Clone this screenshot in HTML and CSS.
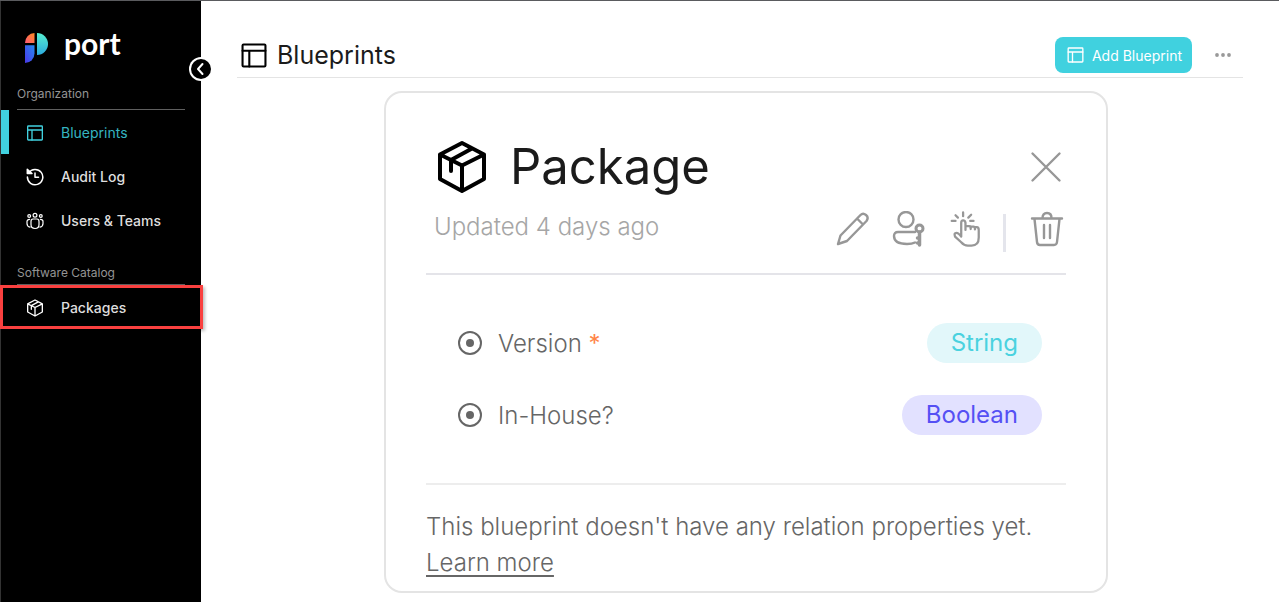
FILE: index.html
```html
<!DOCTYPE html>
<html lang="en">
<head>
<meta charset="utf-8">
<meta name="viewport" content="width=device-width, initial-scale=1">
<title>Blueprints</title>
<link rel="stylesheet" href="styles.css">
</head>
<body>
<svg class="defs" aria-hidden="true">
  <defs>
    <linearGradient id="orange" x1="1" y1="0" x2="0" y2="1"><stop offset="0" stop-color="#ff8a1f"/><stop offset="1" stop-color="#ff5a78"/></linearGradient>
    <linearGradient id="teal" x1="0" y1="0" x2="0" y2="1"><stop offset="0" stop-color="#56efd0"/><stop offset="1" stop-color="#2caade"/></linearGradient>
    <linearGradient id="blue" x1="1" y1="0" x2="0" y2="1"><stop offset="0" stop-color="#2689f0"/><stop offset="1" stop-color="#4a37e8"/></linearGradient>
    <symbol id="layout" viewBox="0 0 24 24">
      <rect x="1" y="1.500" width="22" height="21" rx="1"/><path d="M1 7.500h22M7.500 7.500v15"/>
    </symbol>
    <symbol id="box" viewBox="0 0 52 54">
      <path d="M26 3 48 14.500V39L26 51 4 39V14.500ZM4 14.500 26 25.500 48 14.500M26 25.500V51M36 8.500 15 20v11"/>
    </symbol>
  </defs>
</svg>
<div class="app">
  <aside class="sidebar">
    <a class="brand" href="#">
      <svg class="brand-mark" viewBox="0 0 23 30" aria-hidden="true">
        <path fill="url(#orange)" d="M0 10A10 10 0 0 1 9.500 0V10Z"/>
        <path fill="url(#blue)" d="M0 12.300H9.500V20.500A9.500 9.500 0 0 1 0 30Z"/>
        <path fill="url(#teal)" d="M12 0A11 11 0 0 1 12 22Z"/>
      </svg>
      <span>port</span>
    </a>
    <button class="collapse" aria-label="Collapse sidebar"><svg viewBox="0 0 20 20" aria-hidden="true"><path d="M11.500 5 7 10l4.500 5"/></svg></button>
    <nav>
      <h2 class="group">Organization</h2>
      <ul class="links">
        <li><a class="link active" href="#"><svg class="icon layout" aria-hidden="true"><use href="#layout"/></svg>Blueprints</a></li>
        <li><a class="link" href="#"><svg class="icon" viewBox="0 0 18 18" aria-hidden="true"><path d="M2.700 4.800A7.700 7.700 0 1 1 1.400 9"/><path d="M1.300 1.300v4.200H6Z" fill="#fff"/><path d="M9 5v4.300h3.500"/></svg>Audit Log</a></li>
        <li><a class="link" href="#"><svg class="icon team" viewBox="0 0 18 18" aria-hidden="true"><circle cx="9" cy="3.200" r="1.900"/><circle cx="3.200" cy="4" r="1.400"/><circle cx="14.800" cy="4" r="1.400"/><path d="M5 9.500Q5 7 7 7h4q2 0 2 2.500v3Q13 16.500 9 16.500T5 12.500ZM3.600 7.300Q1 7.300 1 9.500v2q0 3 3 3.600M14.400 7.300Q17 7.300 17 9.500v2q0 3-3 3.600"/></svg>Users &amp; Teams</a></li>
      </ul>
      <h2 class="group catalog">Software Catalog</h2>
      <ul class="links">
        <li class="marked"><a class="link" href="#"><svg class="icon box" aria-hidden="true"><use href="#box"/></svg>Packages</a></li>
      </ul>
    </nav>
  </aside>
  <main class="main">
    <header class="header">
      <svg class="title-icon" aria-hidden="true"><use href="#layout"/></svg>
      <h1>Blueprints</h1>
      <button class="add"><svg aria-hidden="true"><use href="#layout"/></svg>Add Blueprint</button>
      <button class="more" aria-label="More options"><svg viewBox="0 0 16 4" aria-hidden="true"><circle cx="2" cy="2" r="1.900"/><circle cx="8" cy="2" r="1.900"/><circle cx="14" cy="2" r="1.900"/></svg></button>
    </header>
    <div class="board">
      <article class="card">
        <div class="card-title">
          <svg class="card-icon" aria-hidden="true"><use href="#box"/></svg>
          <h2>Package</h2>
          <button class="tool" aria-label="Close"><svg class="close" viewBox="0 0 36 36" aria-hidden="true"><path d="m4.500 4.500 27 27m0-27-27 27"/></svg></button>
        </div>
        <div class="card-meta">
          <p>Updated 4 days ago</p>
          <div class="tools">
            <button class="tool" aria-label="Edit"><svg viewBox="0 0 36 36" aria-hidden="true"><path d="M3 33 5.500 24.500 25.500 4Q28 1.500 31 4t.5 6L12 30ZM22 7.500l6 6"/></svg></button>
            <button class="tool" aria-label="Permissions"><svg viewBox="0 0 36 36" aria-hidden="true"><circle cx="15" cy="8.500" r="7.500"/><path d="M24 21H7Q3 21 3 25q0 8 13 8 5 0 8-1.500"/><circle cx="28.500" cy="17.500" r="3.500" stroke-width="3"/><path d="M28.500 21v13M28.500 27h-2M28.500 32h-2" stroke-width="3.500"/></svg></button>
            <button class="tool" aria-label="Actions"><svg viewBox="-2 -1 36 38" aria-hidden="true"><path d="M2 9.500h4M6 3.500l2.500 2.500M14 .5v4M22.500 3l-3 3M21.500 9.500H25"/><path d="M12 25.500V11.500Q12 9 14 9t2.500 2.500V19v-4h4q1.500 0 1.500 3v-2.500h3q1.500 0 1.500 3V16h2q2 0 2 3v8Q30.500 35.500 23 35.500h-4q-4 0-7-3.500L5.500 26Q4 22 7 22q2 0 5 4Z"/></svg></button>
            <span class="divider"></span>
            <button class="tool" aria-label="Delete"><svg viewBox="0 0 36 36" aria-hidden="true"><path d="M3 7.500h30M13.500 7Q13.500 2 18 2t4.500 5M5.500 8 8 31q.3 3 3 3h14q2.700 0 3-3L30.500 8M15 14v13M21 14v13"/></svg></button>
          </div>
        </div>
        <ul class="props">
          <li><svg class="dot" viewBox="0 0 24 24" aria-hidden="true"><circle cx="12" cy="12" r="11"/><circle class="core" cx="12" cy="12" r="4"/></svg><span>Version <b>*</b></span><span class="tag string">String</span></li>
          <li><svg class="dot" viewBox="0 0 24 24" aria-hidden="true"><circle cx="12" cy="12" r="11"/><circle class="core" cx="12" cy="12" r="4"/></svg><span>In-House?</span><span class="tag boolean">Boolean</span></li>
        </ul>
        <p class="note">This blueprint doesn't have any relation properties yet. <a href="#">Learn more</a></p>
      </article>
    </div>
  </main>
</div>
</body>
</html>
```
FILE: styles.css
```css
* { box-sizing: border-box; }
body { margin: 0; background: #fff; color: #1b1b1b; font-family: Inter, "Liberation Sans", sans-serif; }
h1, h2, p, ul { margin: 0; padding: 0; font-weight: 400; }
ul { list-style: none; }
button { border: 0; padding: 0; background: none; font: inherit; cursor: pointer; }
svg { display: block; flex: none; fill: none; stroke: currentColor; stroke-linecap: round; stroke-linejoin: round; }
.defs { position: absolute; width: 0; height: 0; }

.app { display: flex; min-height: 100vh; border-top: 1px solid #5a5b5e; }

.sidebar { position: relative; flex: none; width: 201px; background: #000; color: #fff; border-left: 1px solid #333; }
.brand { display: flex; gap: 16px; padding: 24px 24px 0; height: 84px; color: #fff; text-decoration: none; font: 700 30px/36px Lato, sans-serif; }
.brand-mark { width: 23px; height: 30px; margin-top: 8px; stroke: none; }
.collapse { position: absolute; top: 58px; right: -10px; width: 20px; height: 20px; border-radius: 50%; background: #000; color: #fff; box-shadow: 0 0 0 2px #fff; }
.collapse svg { width: 20px; height: 20px; stroke-width: 2; }
.group { height: 25px; margin: 0 16px; border-bottom: 1px solid #5f5f5f; color: #949494; font-size: 12px; line-height: 18px; }
.catalog { height: 21px; margin-top: 22px; }
.link { display: flex; align-items: center; gap: 17px; height: 44px; padding: 1px 0 0 25px; color: #dedede; font-size: 14px; font-weight: 500; line-height: 20px; text-decoration: none; }
.link.active { border-left: 8px solid #41d1df; padding-left: 17px; color: #35b5c1; font-weight: 400; }
.icon { width: 18px; height: 18px; color: #fff; stroke-width: 1.500; }
.icon.team { stroke-width: 1.200; }
.icon.layout { width: 18px; height: 16px; color: #41d1df; stroke-width: 2; }
.icon.box { stroke-width: 4; }
.marked { position: relative; }
.marked::after { content: ""; position: absolute; inset: 0 -2px 0 -1px; border: 3px solid #f9403f; box-shadow: 2px 2px 3px rgba(0, 0, 0, .25); pointer-events: none; }

.main { flex: 1; min-width: 0; padding: 32px 36px 9px; }
.header { display: flex; align-items: center; height: 45px; padding: 0 12px 0 4px; border-bottom: 1px solid #e4e4e4; }
.title-icon { width: 26px; height: 25px; stroke-width: 2; color: #000; }
.header h1 { margin: 0 auto 0 10px; font-size: 25px; line-height: 32px; }
.add { display: flex; align-items: center; gap: 8px; height: 36px; padding: 0 10px 0 12px; border-radius: 8px; background: #40d1df; color: #fff; font-size: 14px; }
.add svg { width: 17px; height: 16px; stroke-width: 2; }
.more { margin-left: 23px; color: #999; }
.more svg { width: 16px; height: 4px; fill: currentColor; stroke: none; }

.board { padding: 13px 0 0 12px; }
.card { max-width: 724px; margin: 0 auto; padding: 42px 40px 10px; border: 2px solid #e4e4e4; border-radius: 18px; background: #fff; }
.card-title { display: flex; align-items: center; height: 64px; padding: 0 2px 0 10px; }
.card-icon { width: 52px; height: 54px; color: #000; stroke-width: 4; }
.card-title h2 { margin: 0 auto 0 22px; font-size: 49px; line-height: 60px; }
.tool { color: #979797; }
.tool svg { width: 36px; height: 36px; stroke-width: 2.400; }
.card-meta { display: flex; justify-content: space-between; height: 76px; padding: 0 1px 0 8px; border-bottom: 2px solid #e4e4e9; }
.card-meta p { padding-top: 12px; color: #a6a6a6; font-size: 24px; font-weight: 300; line-height: 32px; }
.tools { display: flex; align-items: center; gap: 20px; padding-bottom: 14px; }
.divider { width: 3px; height: 38px; margin: 8px 3px 0 0; background: #e4e5ec; }
.props { display: flex; flex-direction: column; gap: 32px; padding: 48px 24px; border-bottom: 2px solid #ededed; color: #666; font-size: 24px; font-weight: 300; }
.props li { display: flex; align-items: center; gap: 16px; padding-left: 8px; }
.dot { width: 24px; height: 24px; stroke-width: 2; }
.core { fill: currentColor; stroke: none; }
.props b { color: #ff8548; font-weight: 400; }
.tag { margin-left: auto; padding: 0 24px; border-radius: 20px; line-height: 40px; font-weight: 400; }
.string { background: #e2f7fa; color: #4ad2df; }
.boolean { background: #e2e1ff; color: #5550f4; }
.note { padding-top: 24px; color: #666; font-size: 24px; font-weight: 300; line-height: 36px; }
.note a { color: inherit; text-underline-offset: 4px; text-decoration-thickness: 2px; }
```
